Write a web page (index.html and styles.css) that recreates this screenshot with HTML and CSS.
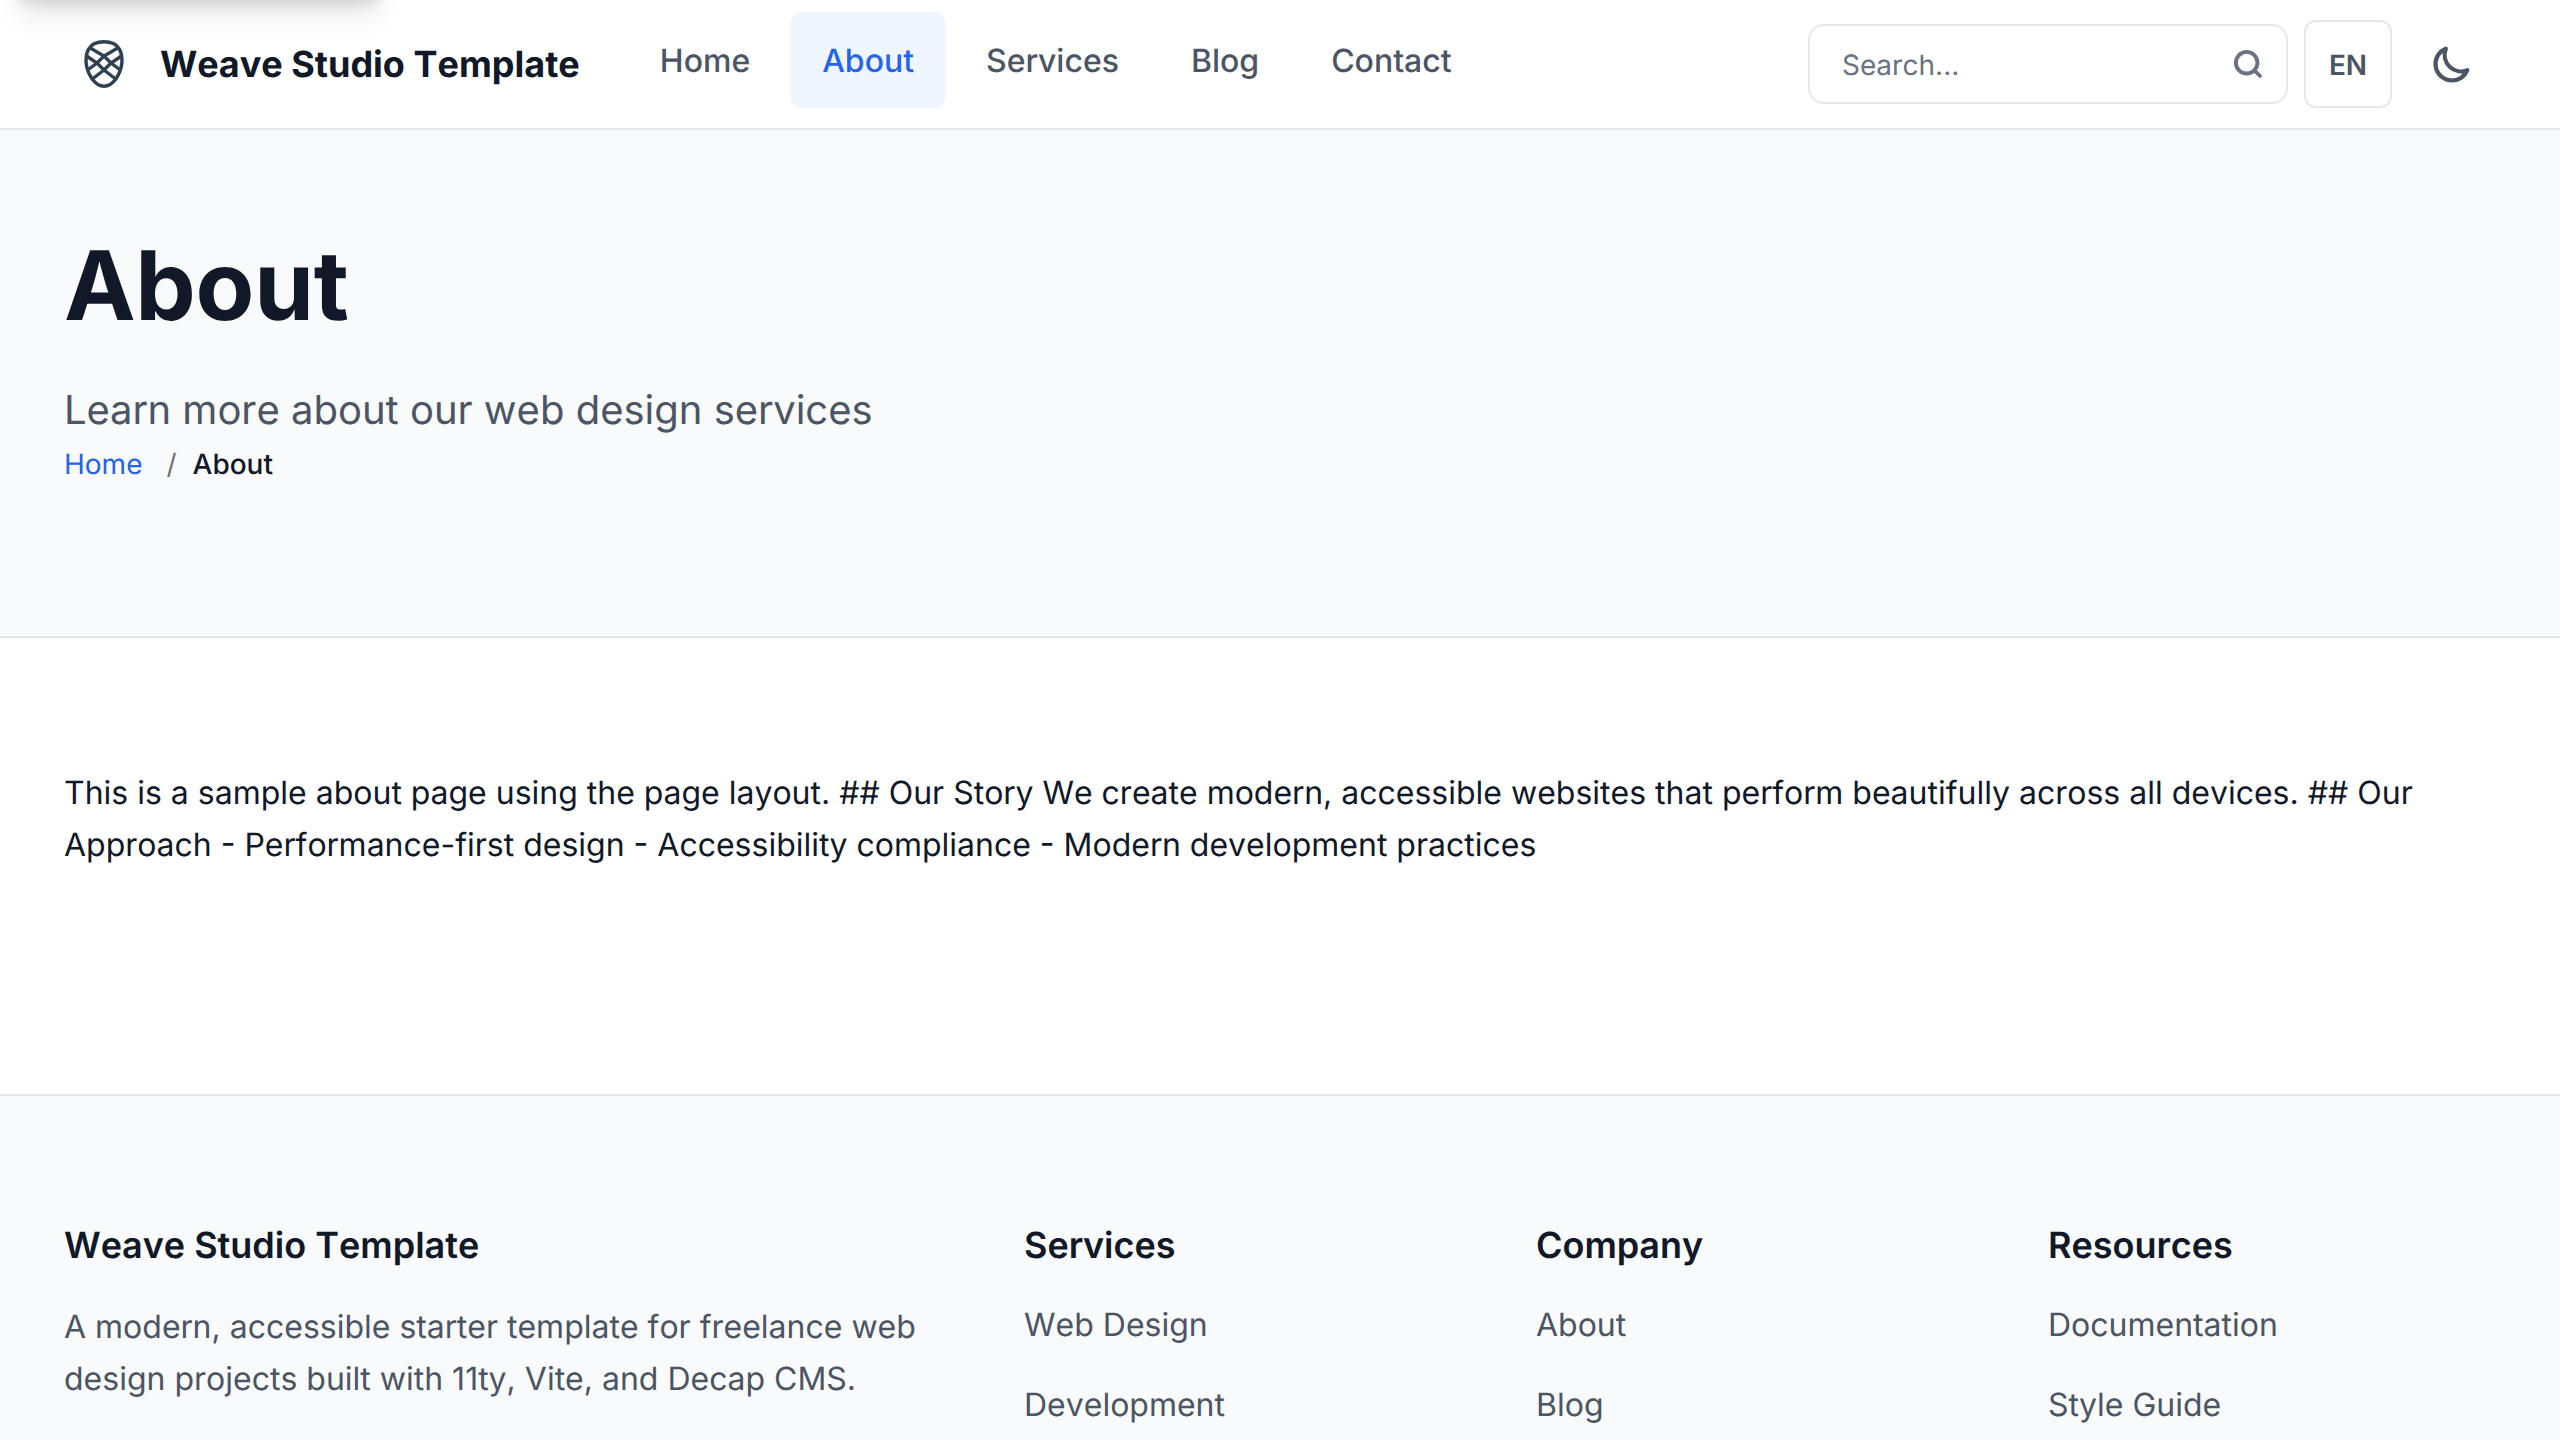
FILE: index.html
```html
<!DOCTYPE html>
<html lang="en">
<head>
<meta charset="utf-8">
<title>About | Weave Studio Template</title>
<link rel="stylesheet" href="styles.css">
</head>
<body>
<div class="skip-shadow"></div>
<header class="header">
  <a class="brand">
    <svg class="brand-mark" viewBox="0 0 40 48" fill="none" stroke="#2f4150" stroke-width="3.4">
      <path d="M20 1.800C27 1.800 32.500 4.200 35.300 8.800C37.600 12.800 38.300 18 37.800 23.500C36.800 33 29.500 46.200 20 46.200C10.500 46.200 3.200 33 2.200 23.500C1.700 18 2.400 12.800 4.700 8.800C7.500 4.200 13 1.800 20 1.800Z"/>
      <path d="M5.500 7.500L20 16L27 23L37 30.500M34.500 7.500L20 16L13 23L3 30.500M2.500 16L13 23L20 30L33 40M37.500 16L27 23L20 30L7 40"/>
    </svg>
    <span>Weave Studio Template</span>
  </a>
  <nav class="nav">
    <a>Home</a><a class="active">About</a><a>Services</a><a>Blog</a><a>Contact</a>
  </nav>
  <div class="tools">
    <div class="search">
      <span>Search...</span>
      <svg class="search-icon" viewBox="0 0 24 24" fill="none" stroke="currentColor" stroke-width="2.9" stroke-linecap="round"><circle cx="11" cy="11" r="8.1"/><path d="M21 21l-4.350-4.350"/></svg>
    </div>
    <button class="lang">EN</button>
    <button class="theme"><svg class="moon" viewBox="0 0 24 24" fill="none" stroke="currentColor" stroke-width="2.3" stroke-linecap="round" stroke-linejoin="round"><path d="M20.354 15.354A9 9 0 018.646 3.646 9.003 9.003 0 0012 21a9.003 9.003 0 008.354-5.646z"/></svg></button>
  </div>
</header>
<section class="hero">
  <h1>About</h1>
  <p class="lead">Learn more about our web design services</p>
  <div class="crumbs"><a>Home</a><span class="sep">/</span><span class="here">About</span></div>
</section>
<main class="content">
  <p>This is a sample about page using the page layout. ## Our Story We create modern, accessible websites that perform beautifully across all devices. ## Our Approach - Performance-first design - Accessibility compliance - Modern development practices</p>
</main>
<footer class="footer">
  <div class="about"><h3>Weave Studio Template</h3><p>A modern, accessible starter template for freelance web design projects built with 11ty, Vite, and Decap CMS.</p></div>
  <div><h3>Services</h3><ul><li>Web Design</li><li>Development</li></ul></div>
  <div><h3>Company</h3><ul><li>About</li><li>Blog</li></ul></div>
  <div><h3>Resources</h3><ul><li>Documentation</li><li>Style Guide</li></ul></div>
</footer>
</body>
</html>
```
FILE: styles.css
```css
* { box-sizing: border-box; margin: 0; padding: 0; }
html, body { height: 1440px; overflow: hidden; }
body { font: 400 32px/52px Inter, sans-serif; font-kerning: none; text-rendering: geometricPrecision; color: #111827; background: #fff; }
ul { list-style: none; }
button { font: inherit; font-kerning: none; text-rendering: inherit; background: none; border: 0; color: inherit; }

/* Skip link parked above the viewport; only its shadow falls into view */
.skip-shadow { position: absolute; left: 15px; top: -80px; width: 368px; height: 80px; border-radius: 12px; box-shadow: 0 20px 30px -6px rgba(0,0,0,.1), 0 8px 12px -4px rgba(0,0,0,.1); z-index: 2; }

.header { display: flex; align-items: center; height: 130px; padding: 0 64px; border-bottom: 2px solid #e5e7eb; }
.brand { display: flex; align-items: center; gap: 36px; padding-left: 20px; font-size: 36px; font-weight: 700; white-space: nowrap; }
.brand-mark { width: 40px; height: 48px; }
.nav { display: flex; gap: 8px; height: 96px; margin: -8px 0 0 48px; color: #4b5563; font-weight: 500; }
.nav a { display: flex; align-items: center; padding: 2px 32px 0; border-radius: 12px; }
.nav .active { background: #eff6ff; color: #2563eb; }
.tools { display: flex; align-items: center; gap: 16px; margin-left: auto; color: #4b5563; }
.search { display: flex; align-items: center; justify-content: space-between; width: 480px; height: 80px; padding: 0 22px 0 32px; border: 2px solid #e5e7eb; border-radius: 16px; color: #6b7280; font-size: 28px; }
.search span { padding-top: 2px; }
.search-icon { width: 32px; height: 32px; }
.lang { width: 88px; height: 88px; padding-top: 2px; border: 2px solid #e5e7eb; border-radius: 12px; font-size: 28px; font-weight: 600; }
.theme { display: flex; align-items: center; justify-content: center; width: 88px; height: 88px; }
.moon { width: 44px; height: 44px; }

.hero { height: 508px; padding: 96px 64px 0; background: #f9fafb; border-bottom: 2px solid #e5e7eb; }
.hero h1 { font-size: 96px; line-height: 120px; font-weight: 700; letter-spacing: -.3px; }
.lead { margin-top: 32px; font-size: 40px; line-height: 64px; color: #4b5563; }
.crumbs { display: flex; font-size: 28px; line-height: 45px; color: #6b7280; }
.crumbs a { color: #2563eb; }
.sep { margin: 0 16px 0 24px; }
.here { color: #111827; font-weight: 500; }

.content { height: 456px; padding: 129px 64px 0; }

.footer { display: grid; grid-template-columns: 2fr 1fr 1fr 1fr; gap: 64px; height: 346px; padding: 127px 64px 0; background: #f9fafb; border-top: 2px solid #e5e7eb; color: #4b5563; }
.footer h3 { margin-bottom: 31px; color: #111827; font-size: 36px; line-height: 45px; font-weight: 600; }
.footer .about h3 { margin-bottom: 33px; }
.footer li { height: 80px; }
```
